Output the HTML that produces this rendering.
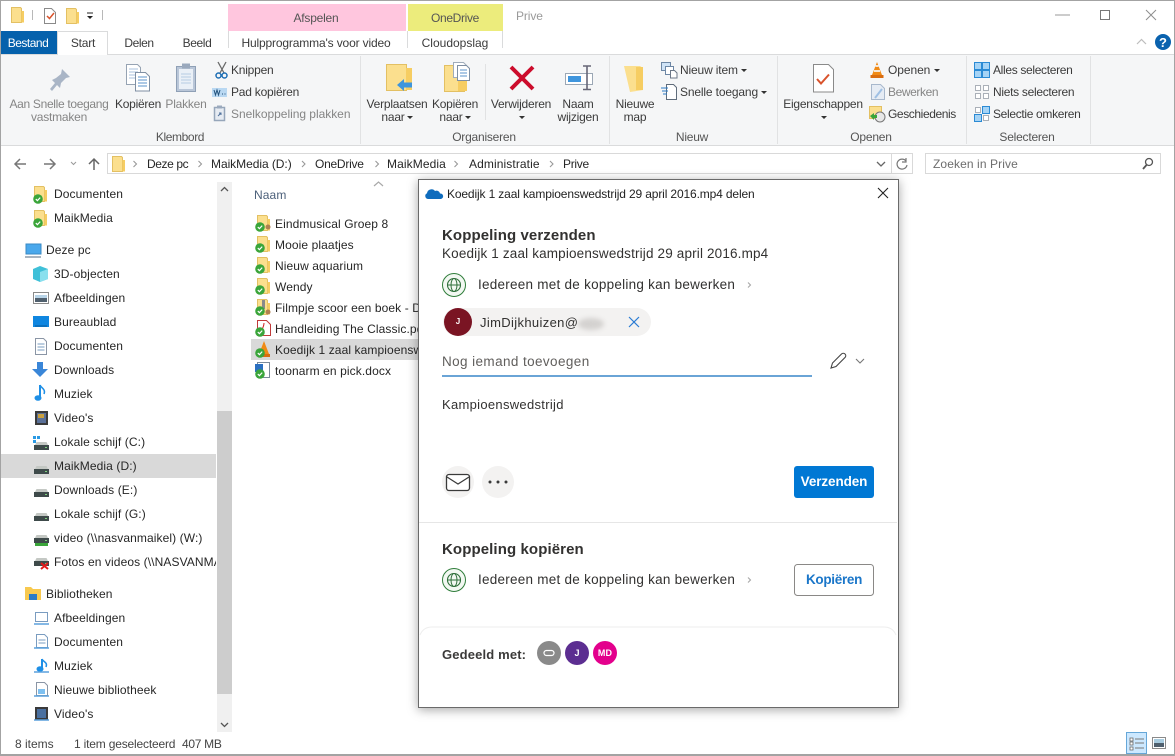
<!DOCTYPE html>
<html><head><meta charset="utf-8"><style>
html,body{margin:0;padding:0;width:1175px;height:756px;overflow:hidden;background:#fff}
body{font-family:"Liberation Sans",sans-serif;font-size:12px;color:#262626;position:relative}
.b{position:absolute}
.t{position:absolute;white-space:nowrap;line-height:16px;height:16px;letter-spacing:.1px}
.c{transform:translateX(-50%)}
.r{color:#3b3b3b;letter-spacing:-.22px}
.g{color:#858585;letter-spacing:-.22px}
.d{font-size:13.500px;letter-spacing:.2px;color:#323130}
.h{font-size:15px;font-weight:bold;color:#323130;letter-spacing:.1px}
svg{position:absolute;left:0;top:0}
</style></head><body>
<div class="b" style="left:228px;top:4px;width:178px;height:27px;background:#ffc6de"></div>
<div class="b" style="left:408px;top:4px;width:95px;height:27px;background:#ecec7c"></div>
<div class="b" style="left:228px;top:31px;width:1px;height:17px;background:#dadbdc"></div>
<div class="b" style="left:407px;top:31px;width:1px;height:17px;background:#dadbdc"></div>
<div class="b" style="left:502px;top:31px;width:1px;height:17px;background:#dadbdc"></div>
<div class="b" style="left:1px;top:54px;width:1173px;height:92px;background:#f5f6f7;border-top:1px solid #dadbdc;border-bottom:1px solid #dadbdc;box-sizing:border-box"></div>
<div class="b" style="left:1px;top:31px;width:56px;height:23px;background:#0561ac"></div>
<div class="b" style="left:57px;top:31px;width:51px;height:24px;background:#fff;border:1px solid #dadbdc;border-bottom:none;box-sizing:border-box"></div>
<div class="b" style="left:360px;top:56px;width:1px;height:88px;background:#e1e2e3"></div>
<div class="b" style="left:485px;top:64px;width:1px;height:56px;background:#e1e2e3"></div>
<div class="b" style="left:609px;top:56px;width:1px;height:88px;background:#e1e2e3"></div>
<div class="b" style="left:777px;top:56px;width:1px;height:88px;background:#e1e2e3"></div>
<div class="b" style="left:966px;top:56px;width:1px;height:88px;background:#e1e2e3"></div>
<div class="b" style="left:1090px;top:56px;width:1px;height:88px;background:#e1e2e3"></div>
<div class="b" style="left:107px;top:153px;width:806px;height:21px;border:1px solid #d9d9d9;box-sizing:border-box;background:#fff"></div>
<div class="b" style="left:891px;top:153px;width:1px;height:21px;background:#d9d9d9"></div>
<div class="b" style="left:925px;top:153px;width:236px;height:21px;border:1px solid #d9d9d9;box-sizing:border-box;background:#fff"></div>
<div class="b" style="left:1px;top:454px;width:215px;height:24px;background:#d9d9d9"></div>
<div class="b" style="left:217px;top:182px;width:15px;height:550px;background:#f0f0f0"></div>
<div class="b" style="left:217px;top:411px;width:15px;height:283px;background:#cdcdcd"></div>
<div class="b" style="left:251px;top:339px;width:167px;height:21px;background:#d9d9d9"></div>
<div class="b" style="left:1126px;top:732px;width:21px;height:22px;background:#cce8ff;border:1px solid #66a7d8;box-sizing:border-box"></div>
<div class="b" style="left:0;top:0;width:1175px;height:756px;box-sizing:border-box;border:1px solid #a3a3a3;border-bottom-width:2px"></div>

<svg width="1175" height="756" viewBox="0 0 1175 756" fill="none">
<defs>
<symbol id="f" viewBox="0 0 16 16" overflow="visible"><path d="M1.500 .5h9l1 1v14h-10z" fill="#fbdf8e" stroke="#e3c063"/><path d="M11.500 4h2.500v11.500h-2.500z" fill="#f6cd62"/></symbol>
<symbol id="k" viewBox="0 0 10 10" overflow="visible"><circle cx="5" cy="5" r="4.800" fill="#3aa53a"/><path d="M2.800 5.100 4.400 6.600 7.200 3.600" stroke="#fff" stroke-width="1.200"/></symbol>
<symbol id="dr" viewBox="0 0 15 8" overflow="visible"><path d="M1 3l1.500-3h10l1.500 3z" fill="#c4c8c4"/><rect x="0" y="3" width="15" height="5" fill="#3e4a4a"/><rect x="11" y="5" width="2" height="1" fill="#7ed07e"/></symbol>
</defs>
<!-- QAT -->
<use href="#f" x="10" y="7" width="16" height="16"/><path d="M32.500 10v10" stroke="#b8b8b8"/>
<path d="M44.500 8.500h7l4 4v11h-11z" fill="#fff" stroke="#8a8a8a"/><path d="M47 16l2.500 2.500L54 13" stroke="#d9532c" stroke-width="1.500"/>
<use href="#f" x="65" y="8" width="16" height="16"/>
<path d="M87 13h6" stroke="#222"/><path d="M87 16h6l-3 3z" fill="#222"/><path d="M102.500 10v10" stroke="#b8b8b8"/>
<!-- window controls -->
<path d="M1055 15h15" stroke="#9a9a9a"/><rect x="1100.500" y="10.500" width="9" height="9" stroke="#777"/><path d="M1146 10l10 10M1156 10l-10 10" stroke="#8f8f8f"/>
<path d="M1137 44l4.500-4.500L1146 44" stroke="#bdbdbd" stroke-width="1.200"/><circle cx="1163" cy="42" r="8" fill="#0a62ae"/>
<text x="1163" y="47" font-family="Liberation Sans" font-size="13" font-weight="bold" fill="#fff" text-anchor="middle">?</text>
<!-- pin -->
<path d="M62 69l8 8-4 1-5 5-1 5-3-3-5 6-2-2 5-6-3-3 4-2 5-4z" fill="#a9b5c6"/>
<!-- copy -->
<path d="M126.500 64.500h11l3 3v17h-14z" fill="#fff" stroke="#96a3b3"/><path d="M129 69h9M129 72h9M129 75h9M129 78h9" stroke="#a9c2dc"/>
<path d="M135.500 72.500h10l4 4v14.500h-14z" fill="#fff" stroke="#7f8fa3"/><path d="M138 77h9M138 80h9M138 83h9M138 86h9" stroke="#5b93cb"/>
<!-- paste -->
<rect x="176.500" y="66.500" width="19" height="25" fill="#b9c6d8" stroke="#8fa0b6"/><rect x="179" y="69" width="14" height="20" fill="#eaf0f7"/><rect x="182" y="63.500" width="8" height="5" fill="#9aa9bd"/><path d="M181 74h10M181 77h10M181 80h10M181 83h10" stroke="#b6cce3"/>
<!-- scissors -->
<path d="M218 62l6 11M226 62l-6 11" stroke="#6a6a6a" stroke-width="1.300"/><circle cx="218.500" cy="75.500" r="2.500" stroke="#1f6fb5" stroke-width="1.500"/><circle cx="224.500" cy="75.500" r="2.500" stroke="#1f6fb5" stroke-width="1.500"/>
<!-- pad -->
<rect x="212" y="88" width="15" height="9" fill="#b9d8f2"/><path d="M214 90l1.500 5 1.500-5 1.500 5 1.500-5M222 94h1M224.500 94h1" stroke="#23527c"/>
<!-- shortcut -->
<rect x="214.500" y="107.500" width="10" height="13" fill="#e6ebf2" stroke="#96a6ba" stroke-width="1.500"/><rect x="217" y="105.500" width="5" height="3" fill="#9aa9bd"/><path d="M218 116l3-3M219 113h2v2" stroke="#50729c"/>
<!-- move -->
<path d="M386.500 64.500h20v26h-20z" fill="#fbdf8e" stroke="#e3c063"/><path d="M406 68h6v22h-6z" fill="#f6cd62"/><path d="M397 85l7-6v3.500h8v5h-8v3.500z" fill="#3d95dc"/>
<!-- copy to -->
<path d="M444.500 65.500h20v26h-20z" fill="#fbdf8e" stroke="#e3c063"/><path d="M458 70h9v21h-9z" fill="#f6cd62"/>
<path d="M453.500 62.500h10l3 3v12h-13z" fill="#fff" stroke="#a0acba"/><path d="M457.500 65.500h9l3 3v12h-12z" fill="#fff" stroke="#7f8fa3"/><path d="M460 70h7M460 73h7M460 76h7" stroke="#5b93cb"/>
<!-- delete -->
<path d="M511 67l22 22M533 67l-22 22" stroke="#cc0c2c" stroke-width="4"/>
<!-- rename -->
<rect x="565.500" y="73.500" width="27" height="11" fill="#fff" stroke="#9ba7b5"/><rect x="568" y="76" width="13" height="6" fill="#3f95dd"/><path d="M583 66h4.500M591 66h-3.500M587 66v23.500M583 89.500h8" stroke="#667" stroke-width="1.600"/>
<!-- new folder -->
<path d="M624 66h16l3 2v22l-13 2z" fill="#fbdf8e"/><path d="M636 67h7v23h-7z" fill="#f6cd62"/>
<!-- new item -->
<rect x="661.500" y="62.500" width="9" height="8" fill="#cfe3f6" stroke="#6d87a5"/><rect x="665.500" y="66.500" width="8" height="8" fill="#fff" stroke="#6d87a5"/><path d="M670.500 70.500h4l2.500 2.500v5h-6.500z" fill="#fff" stroke="#6d7888"/>
<!-- quick access -->
<path d="M666.500 84.500h7l3 3v12h-10z" fill="#fff" stroke="#5f6c7b"/><path d="M661 88h7M662 91h6M663 94h4" stroke="#2a7ac6" stroke-width="1.100"/>
<!-- properties -->
<path d="M813.500 64.500h15l5 5v22.500h-20z" fill="#fff" stroke="#8a8a8a"/><path d="M817 79l4 4.500 8-9" stroke="#d9532c" stroke-width="2"/>
<!-- vlc -->
<path d="M877 62l5 13h-10z" fill="#f08a16"/><path d="M875.500 66h3M874 71h6" stroke="#f4f4f4" stroke-width="1.800"/><path d="M870.500 75h13v3h-13z" fill="#d96c10"/>
<!-- edit -->
<path d="M871.500 84.500h9l4 4v11h-13z" fill="#e6ecf4" stroke="#a8b8cc"/><path d="M875 98l7-9" stroke="#9fc0e4" stroke-width="2"/>
<!-- history -->
<path d="M869.500 106.500h12v12h-12z" fill="#fbdf8e" stroke="#e3c063"/><circle cx="880" cy="117" r="5" fill="#e8e8e8" stroke="#777"/><path d="M870 116l4-3v2h3v3h-3v2z" fill="#3aa53a"/>
<!-- select -->
<g stroke="#2a8ad4" fill="#a5d3f5"><rect x="974.500" y="62.500" width="7" height="7"/><rect x="982.500" y="62.500" width="7" height="7"/><rect x="974.500" y="70.500" width="7" height="7"/><rect x="982.500" y="70.500" width="7" height="7"/></g>
<g stroke="#aab0b8" fill="#fff"><rect x="975.500" y="85.500" width="5" height="5"/><rect x="983.500" y="85.500" width="5" height="5"/><rect x="975.500" y="93.500" width="5" height="5"/><rect x="983.500" y="93.500" width="5" height="5"/></g>
<rect x="975.500" y="107.500" width="5" height="5" stroke="#aab0b8" fill="#fff"/><rect x="982.500" y="106.500" width="7" height="7" stroke="#2a8ad4" fill="#a5d3f5"/><rect x="974.500" y="114.500" width="7" height="7" stroke="#2a8ad4" fill="#a5d3f5"/><rect x="983.500" y="115.500" width="5" height="5" stroke="#aab0b8" fill="#fff"/>
<!-- dropdown arrows -->
<g fill="#333"><path d="M407 116h6l-3 3zM465 116h6l-3 3zM519 116h6l-3 3zM821 116h6l-3 3zM741 69h6l-3 3zM761 91h6l-3 3zM934 69h6l-3 3z"/></g>
<!-- nav arrows -->
<path d="M26 164H15M20 159l-5 5 5 5" stroke="#777" stroke-width="1.500"/><path d="M44 164h11M50 159l5 5-5 5" stroke="#777" stroke-width="1.500"/><path d="M71 162l2.500 2.500L76 162" stroke="#999"/><path d="M94 170v-11M89 164l5-5 5 5" stroke="#666" stroke-width="1.500"/>
<use href="#f" x="111" y="156" width="16" height="16"/>
<g stroke="#999" stroke-width="1.100"><path d="M133.500 161l3 3-3 3M198.500 161l3 3-3 3M302 161l3 3-3 3M375.500 161l3 3-3 3M454.500 161l3 3-3 3M550 161l3 3-3 3"/></g>
<path d="M877 162l4 4 4-4" stroke="#666" stroke-width="1.300"/><path d="M906 161a5 5 0 1 0 1 4M906 158v4h-4" stroke="#777" stroke-width="1.200"/>
<circle cx="1149" cy="162" r="3.500" stroke="#555" stroke-width="1.300"/><path d="M1146.500 165l-3.500 4" stroke="#555" stroke-width="1.800"/>
<path d="M221 191l3.500-3.500L228 191M221 723l3.500 3.500L228 723" stroke="#555" stroke-width="1.300"/>
<!-- nav icons -->
<use href="#f" x="33" y="186" width="16" height="16"/><use href="#k" x="33" y="194" width="10" height="10"/>
<use href="#f" x="33" y="210" width="16" height="16"/><use href="#k" x="33" y="218" width="10" height="10"/>
<rect x="26" y="244" width="15" height="10" fill="#4aa8ec" stroke="#3a8ac4"/><path d="M25 257h16" stroke="#8a9aaa" stroke-width="1.500"/>
<path d="M40 266l8 3v10l-8 3-7-3v-10z" fill="#3fc0d8"/><path d="M40 272l8-3v10l-8 3z" fill="#8ae0ee"/>
<rect x="33.500" y="292.500" width="15" height="11" fill="#fff" stroke="#8a8a8a"/><path d="M35 295h12v3H35z" fill="#b8d4e8"/><path d="M35 298h12v4H35z" fill="#50606e"/>
<rect x="33" y="316" width="16" height="11" fill="#0f86e0"/><path d="M35 326h12" stroke="#0a5a9a"/>
<path d="M35.500 338.500h8l3 3v13h-11z" fill="#fff" stroke="#8a95a5"/><path d="M37.500 344h7M37.500 347h7M37.500 350h7" stroke="#7a9cc0"/>
<path d="M37 362h6v7h5l-8 8-8-8h5z" fill="#3a86d8"/>
<path d="M40 385v13" stroke="#1e8fe6" stroke-width="2"/><ellipse cx="38" cy="398" rx="3.500" ry="2.800" fill="#1e8fe6"/><path d="M40 385c1 3 6 4 4 9" stroke="#1e8fe6" stroke-width="1.500"/>
<rect x="35" y="411" width="13" height="14" fill="#3a3a3a"/><rect x="37" y="413" width="9" height="10" fill="#5a7098"/><path d="M38 414h6v4h-6z" fill="#c9a040"/>
<path d="M33 436h3v3h-3zM37 436h3v3h-3zM33 440h3v3h-3z" fill="#2a9ae4"/><use href="#dr" x="34" y="442" width="15" height="8"/>
<use href="#dr" x="34" y="466" width="15" height="8"/>
<use href="#dr" x="34" y="489" width="15" height="8"/>
<use href="#dr" x="34" y="513" width="15" height="8"/>
<use href="#dr" x="34" y="535" width="15" height="8"/><rect x="35" y="543" width="13" height="3" fill="#3aa53a"/>
<use href="#dr" x="34" y="558" width="15" height="8"/><path d="M41 563l7 6M48 563l-7 6" stroke="#e21b1b" stroke-width="2"/>
<path d="M25 587h6l2 2h8v11H25z" fill="#f8c94f"/><rect x="29" y="594" width="8" height="6" fill="#2a7ac6"/>
<rect x="35.500" y="612.500" width="12" height="9" fill="#fff" stroke="#7a9cc0"/><path d="M34 624h15" stroke="#5aa0dc" stroke-width="1.500"/>
<path d="M36.500 634.500h8l3 3v10h-11z" fill="#fff" stroke="#7a9cc0"/><path d="M38.500 640h7M38.500 643h7" stroke="#7a9cc0"/><path d="M34 648h15" stroke="#5aa0dc" stroke-width="1.500"/>
<path d="M42 659v11" stroke="#1e8fe6" stroke-width="2"/><ellipse cx="40" cy="669" rx="3.500" ry="2.800" fill="#1e8fe6"/><path d="M42 659c1 3 6 3 4 8" stroke="#1e8fe6" stroke-width="1.500"/><path d="M34 672h15" stroke="#5aa0dc" stroke-width="1.500"/>
<path d="M36.500 682.500h8l3 3v10h-11z" fill="#fff" stroke="#8a95a5"/><rect x="38" y="689" width="7" height="5" fill="#7ec0f0"/><path d="M34 696h15" stroke="#5aa0dc" stroke-width="1.500"/>
<rect x="35" y="707" width="13" height="13" fill="#3a3a3a"/><rect x="37" y="709" width="9" height="9" fill="#4a70a0"/><path d="M34 720h15" stroke="#5aa0dc" stroke-width="1.500"/>
<!-- list -->
<path d="M374 186l4.500-4 4.500 4" stroke="#a8a8a8" stroke-width="1.200"/>
<use href="#f" x="256" y="215" width="16" height="16"/><use href="#k" x="255" y="222" width="10" height="10"/><circle cx="268" cy="227" r="2.500" fill="#b08050"/>
<use href="#f" x="256" y="236" width="16" height="16"/><use href="#k" x="255" y="243" width="10" height="10"/>
<use href="#f" x="256" y="257" width="16" height="16"/><use href="#k" x="255" y="264" width="10" height="10"/>
<use href="#f" x="256" y="278" width="16" height="16"/><use href="#k" x="255" y="285" width="10" height="10"/>
<use href="#f" x="256" y="299" width="16" height="16"/><rect x="262" y="300" width="3" height="9" fill="#8a8a8a"/><use href="#k" x="255" y="306" width="10" height="10"/><circle cx="268" cy="312" r="2.500" fill="#b08050"/>
<path d="M257.500 320.500h9l4 4v11h-13z" fill="#fff" stroke="#c03a3a"/><path d="M261 331c2-3 3-6 3-8" stroke="#d02020"/><use href="#k" x="255" y="327" width="10" height="10"/>
<path d="M264 341l5 13h-10z" fill="#f08a16"/><path d="M258 354h12v3h-12z" fill="#d96c10"/><use href="#k" x="255" y="348" width="10" height="10"/>
<path d="M261.500 362.500h8v15h-12v-15z" fill="#fff" stroke="#7a8a9a"/><rect x="255" y="364" width="8" height="8" fill="#2a6fc0"/><use href="#k" x="255" y="369" width="10" height="10"/>
<!-- view -->
<path d="M1130 738h3v3h-3zM1130 742h3v3h-3zM1130 747h3v3h-3z" stroke="#666" fill="#fff" stroke-width=".8"/><path d="M1135 739h9M1135 743h9M1135 748h9" stroke="#777"/>
<rect x="1152.500" y="737.500" width="13" height="11" fill="#fff" stroke="#8a8a8a"/><path d="M1154 739h10v4h-10z" fill="#a8cce0"/><path d="M1154 743h10v4h-10z" fill="#50606e"/>
</svg>

<span class="t" style="left:28px;top:35px;color:#fff;transform:translateX(-50%);letter-spacing:-.5px">Bestand</span>
<span class="t c r" style="left:83px;top:35px">Start</span>
<span class="t c r" style="left:139px;top:35px;letter-spacing:-.4px">Delen</span>
<span class="t c r" style="left:197px;top:35px;letter-spacing:-.4px">Beeld</span>
<span class="t c r" style="left:316px;top:35px;letter-spacing:-.15px">Hulpprogramma's voor video</span>
<span class="t c r" style="left:455px;top:35px;letter-spacing:0">Cloudopslag</span>
<span class="t c r" style="left:316px;top:10px;color:#555">Afspelen</span>
<span class="t c r" style="left:455px;top:10px;color:#555;letter-spacing:-.35px">OneDrive</span>
<span class="t" style="left:516px;top:8px;color:#9a9a9a;letter-spacing:-.1px">Prive</span>

<span class="t c g" style="left:59px;top:96px;letter-spacing:-.32px">Aan Snelle toegang</span>
<span class="t c g" style="left:59px;top:109px">vastmaken</span>
<span class="t c r" style="left:138px;top:96px;letter-spacing:-.25px">Kopiëren</span>
<span class="t c g" style="left:186px;top:96px">Plakken</span>
<span class="t r" style="left:231px;top:62px">Knippen</span>
<span class="t r" style="left:231px;top:84px">Pad kopiëren</span>
<span class="t g" style="left:231px;top:106px;letter-spacing:-.03px">Snelkoppeling plakken</span>
<span class="t c r" style="left:180px;top:129px;color:#555;letter-spacing:-.4px">Klembord</span>
<span class="t c r" style="left:397px;top:96px">Verplaatsen</span>
<span class="t c r" style="left:393px;top:109px">naar</span>
<span class="t c r" style="left:455px;top:96px;letter-spacing:-.25px">Kopiëren</span>
<span class="t c r" style="left:451px;top:109px">naar</span>
<span class="t c r" style="left:521px;top:96px">Verwijderen</span>
<span class="t c r" style="left:578px;top:96px">Naam</span>
<span class="t c r" style="left:578px;top:109px">wijzigen</span>
<span class="t c r" style="left:484px;top:129px;color:#555">Organiseren</span>
<span class="t c r" style="left:635px;top:96px">Nieuwe</span>
<span class="t c r" style="left:635px;top:109px">map</span>
<span class="t r" style="left:680px;top:62px;letter-spacing:-.15px">Nieuw item</span>
<span class="t r" style="left:680px;top:84px;letter-spacing:-.15px">Snelle toegang</span>
<span class="t c r" style="left:692px;top:129px;color:#555">Nieuw</span>
<span class="t c r" style="left:823px;top:96px;letter-spacing:-.25px">Eigenschappen</span>
<span class="t r" style="left:888px;top:62px;letter-spacing:-.07px">Openen</span>
<span class="t g" style="left:888px;top:84px;letter-spacing:-.4px">Bewerken</span>
<span class="t r" style="left:888px;top:106px;letter-spacing:-.4px">Geschiedenis</span>
<span class="t c r" style="left:871px;top:129px;color:#555">Openen</span>
<span class="t r" style="left:993px;top:62px;letter-spacing:-.33px">Alles selecteren</span>
<span class="t r" style="left:993px;top:84px;letter-spacing:-.3px">Niets selecteren</span>
<span class="t r" style="left:993px;top:106px;letter-spacing:-.33px">Selectie omkeren</span>
<span class="t c r" style="left:1027px;top:129px;color:#555">Selecteren</span>

<span class="t" style="left:147px;top:156px;letter-spacing:-.4px">Deze pc</span>
<span class="t" style="left:211px;top:156px;letter-spacing:-.05px">MaikMedia (D:)</span>
<span class="t" style="left:315px;top:156px;letter-spacing:-.25px">OneDrive</span>
<span class="t" style="left:387px;top:156px">MaikMedia</span>
<span class="t" style="left:469px;top:156px">Administratie</span>
<span class="t" style="left:563px;top:156px;letter-spacing:-.3px">Prive</span>
<span class="t" style="left:933px;top:156px;color:#6d6d6d">Zoeken in Prive</span>

<span class="t" style="left:54px;top:186px">Documenten</span>
<span class="t" style="left:54px;top:210px">MaikMedia</span>
<span class="t" style="left:46px;top:242px">Deze pc</span>
<span class="t" style="left:54px;top:266px">3D-objecten</span>
<span class="t" style="left:54px;top:290px">Afbeeldingen</span>
<span class="t" style="left:54px;top:314px">Bureaublad</span>
<span class="t" style="left:54px;top:338px">Documenten</span>
<span class="t" style="left:54px;top:362px">Downloads</span>
<span class="t" style="left:54px;top:386px">Muziek</span>
<span class="t" style="left:54px;top:410px">Video's</span>
<span class="t" style="left:54px;top:434px">Lokale schijf (C:)</span>
<span class="t" style="left:54px;top:458px">MaikMedia (D:)</span>
<span class="t" style="left:54px;top:482px">Downloads (E:)</span>
<span class="t" style="left:54px;top:506px">Lokale schijf (G:)</span>
<span class="t" style="left:54px;top:530px">video (\\nasvanmaikel) (W:)</span>
<div class="b" style="left:54px;top:554px;width:162px;height:16px;overflow:hidden"><span class="t" style="left:0;top:0">Fotos en videos (\\NASVANMAIKEL)</span></div>
<span class="t" style="left:46px;top:586px">Bibliotheken</span>
<span class="t" style="left:54px;top:610px">Afbeeldingen</span>
<span class="t" style="left:54px;top:634px">Documenten</span>
<span class="t" style="left:54px;top:658px">Muziek</span>
<span class="t" style="left:54px;top:682px">Nieuwe bibliotheek</span>
<span class="t" style="left:54px;top:706px">Video's</span>

<span class="t" style="left:254px;top:187px;color:#4c607a">Naam</span>
<span class="t" style="left:275px;top:216px">Eindmusical Groep 8</span>
<span class="t" style="left:275px;top:237px">Mooie plaatjes</span>
<span class="t" style="left:275px;top:258px">Nieuw aquarium</span>
<span class="t" style="left:275px;top:279px">Wendy</span>
<span class="t" style="left:275px;top:300px">Filmpje scoor een boek - De</span>
<span class="t" style="left:275px;top:321px">Handleiding The Classic.pdf</span>
<span class="t" style="left:275px;top:342px">Koedijk 1 zaal kampioenswedstrijd</span>
<span class="t" style="left:275px;top:363px">toonarm en pick.docx</span>

<span class="t" style="left:15px;top:736px;color:#444;letter-spacing:0">8 items</span>
<span class="t" style="left:74px;top:736px;color:#444;letter-spacing:-.18px">1 item geselecteerd</span>
<span class="t" style="left:182px;top:736px;color:#444;letter-spacing:-.3px">407 MB</span>

<!-- dialog -->
<div class="b" style="left:418px;top:179px;width:481px;height:529px;box-sizing:border-box;background:#fff;border:1px solid #6a6a6a;box-shadow:0 2px 10px rgba(0,0,0,.35)"></div>
<svg width="1175" height="756" viewBox="0 0 1175 756" fill="none">
<path d="M428 199a3 3 0 0 1-1-5.700 4.500 4.500 0 0 1 8-2.300 3.500 3.500 0 0 1 5 2.500 2.800 2.800 0 0 1 1 5.500z" fill="#0f6cbd"/>
<path d="M878 188l10 10M888 188l-10 10" stroke="#222" stroke-width="1.100"/>
<g id="gl"><circle cx="454" cy="285" r="11.500" fill="#f2f8f2" stroke="#2f7d3a"/><circle cx="454" cy="285" r="6.500" stroke="#2f6f3a" stroke-width="1.100"/><ellipse cx="454" cy="285" rx="3" ry="6.500" stroke="#2f6f3a"/><path d="M447.500 285h13" stroke="#2f6f3a"/></g>
<use href="#gl" y="295"/>
<path d="M748 282.500l2.500 2.500-2.500 2.500M748 577.500l2.500 2.500-2.500 2.500" stroke="#a8a8a8" stroke-width="1.100"/>
<rect x="443" y="308" width="208" height="28" rx="14" fill="#f3f2f1"/>
<circle cx="458" cy="322" r="14" fill="#7a1423"/>
<ellipse cx="591" cy="324" rx="13" ry="6" fill="#d4d2d0" filter="blur(2.500px)"/>
<path d="M629 317l10 10M639 317l-10 10" stroke="#2b7cd3" stroke-width="1.200"/>
<path d="M442 376h370" stroke="#106ebe" stroke-width="1.200"/>
<path d="M831 368l1.500-5 9-9c1-1 2.500-1 3.500 0s1 2.500 0 3.500l-9 9z" stroke="#444" stroke-width="1.100"/><path d="M856 359l4 4 4-4" stroke="#777" stroke-width="1.100"/>
<circle cx="458" cy="482" r="16" fill="#f3f2f1"/><circle cx="498" cy="482" r="16" fill="#f3f2f1"/>
<rect x="446.500" y="474.500" width="23" height="16" rx="2.500" fill="#fff" stroke="#3a3a3a" stroke-width="1.300"/><path d="M447 477l11 7 11-7" stroke="#3a3a3a" stroke-width="1.200"/>
<circle cx="490" cy="482" r="1.500" fill="#3a3a3a"/><circle cx="498" cy="482" r="1.500" fill="#3a3a3a"/><circle cx="506" cy="482" r="1.500" fill="#3a3a3a"/>
<rect x="794" y="466" width="80" height="32" rx="3" fill="#0078d4"/>
<path d="M419 522.500h478" stroke="#e6e6e6"/>
<rect x="794.500" y="564.500" width="79" height="31" rx="3" fill="#fff" stroke="#8a8886"/>
<path d="M420 635c2-5 6-8 12-8h452c6 0 10 3 12 8" stroke="#eee"/>
<circle cx="549" cy="653" r="12" fill="#8a8a8a"/><rect x="544" y="650.500" width="10" height="5" rx="2.500" stroke="#fff" stroke-width="1.200"/>
<circle cx="577" cy="653" r="12" fill="#5c2e91"/><circle cx="605" cy="653" r="12" fill="#e3008c"/>
</svg>
<span class="t" style="left:447px;top:186px;color:#222;letter-spacing:-.14px">Koedijk 1 zaal kampioenswedstrijd 29 april 2016.mp4 delen</span>
<span class="t h" style="left:442px;top:227px;margin-top:1px">Koppeling verzenden</span>
<span class="t d" style="left:442px;top:246px;letter-spacing:.16px">Koedijk 1 zaal kampioenswedstrijd 29 april 2016.mp4</span>
<span class="t d" style="left:478px;top:277px;letter-spacing:.25px">Iedereen met de koppeling kan bewerken</span>
<span class="t" style="left:458px;top:314px;color:#fff;font-size:8px;font-weight:bold;transform:translateX(-50%)">J</span>
<span class="t d" style="left:480px;top:315px;font-size:13px;letter-spacing:.35px">JimDijkhuizen@</span>
<span class="t d" style="left:442px;top:354px;color:#605e5c;letter-spacing:.4px">Nog iemand toevoegen</span>
<span class="t d" style="left:442px;top:397px;font-size:13px;letter-spacing:.3px">Kampioenswedstrijd</span>
<span class="t c" style="left:834px;top:474px;color:#fff;font-size:13.500px;font-weight:bold;letter-spacing:-.1px">Verzenden</span>
<span class="t h" style="left:442px;top:541px;margin-top:1px">Koppeling kopiëren</span>
<span class="t d" style="left:478px;top:572px;letter-spacing:.25px">Iedereen met de koppeling kan bewerken</span>
<span class="t c" style="left:834px;top:572px;color:#1a76c9;font-size:13.500px;font-weight:bold;letter-spacing:-.3px">Kopiëren</span>
<span class="t" style="left:442px;top:647px;font-size:13px;font-weight:bold;color:#3b3a39;letter-spacing:.15px">Gedeeld met:</span>
<span class="t c" style="left:577px;top:645px;color:#fff;font-size:9px;font-weight:bold">J</span>
<span class="t c" style="left:605px;top:645px;color:#fff;font-size:9px;font-weight:bold">MD</span>
</body></html>
